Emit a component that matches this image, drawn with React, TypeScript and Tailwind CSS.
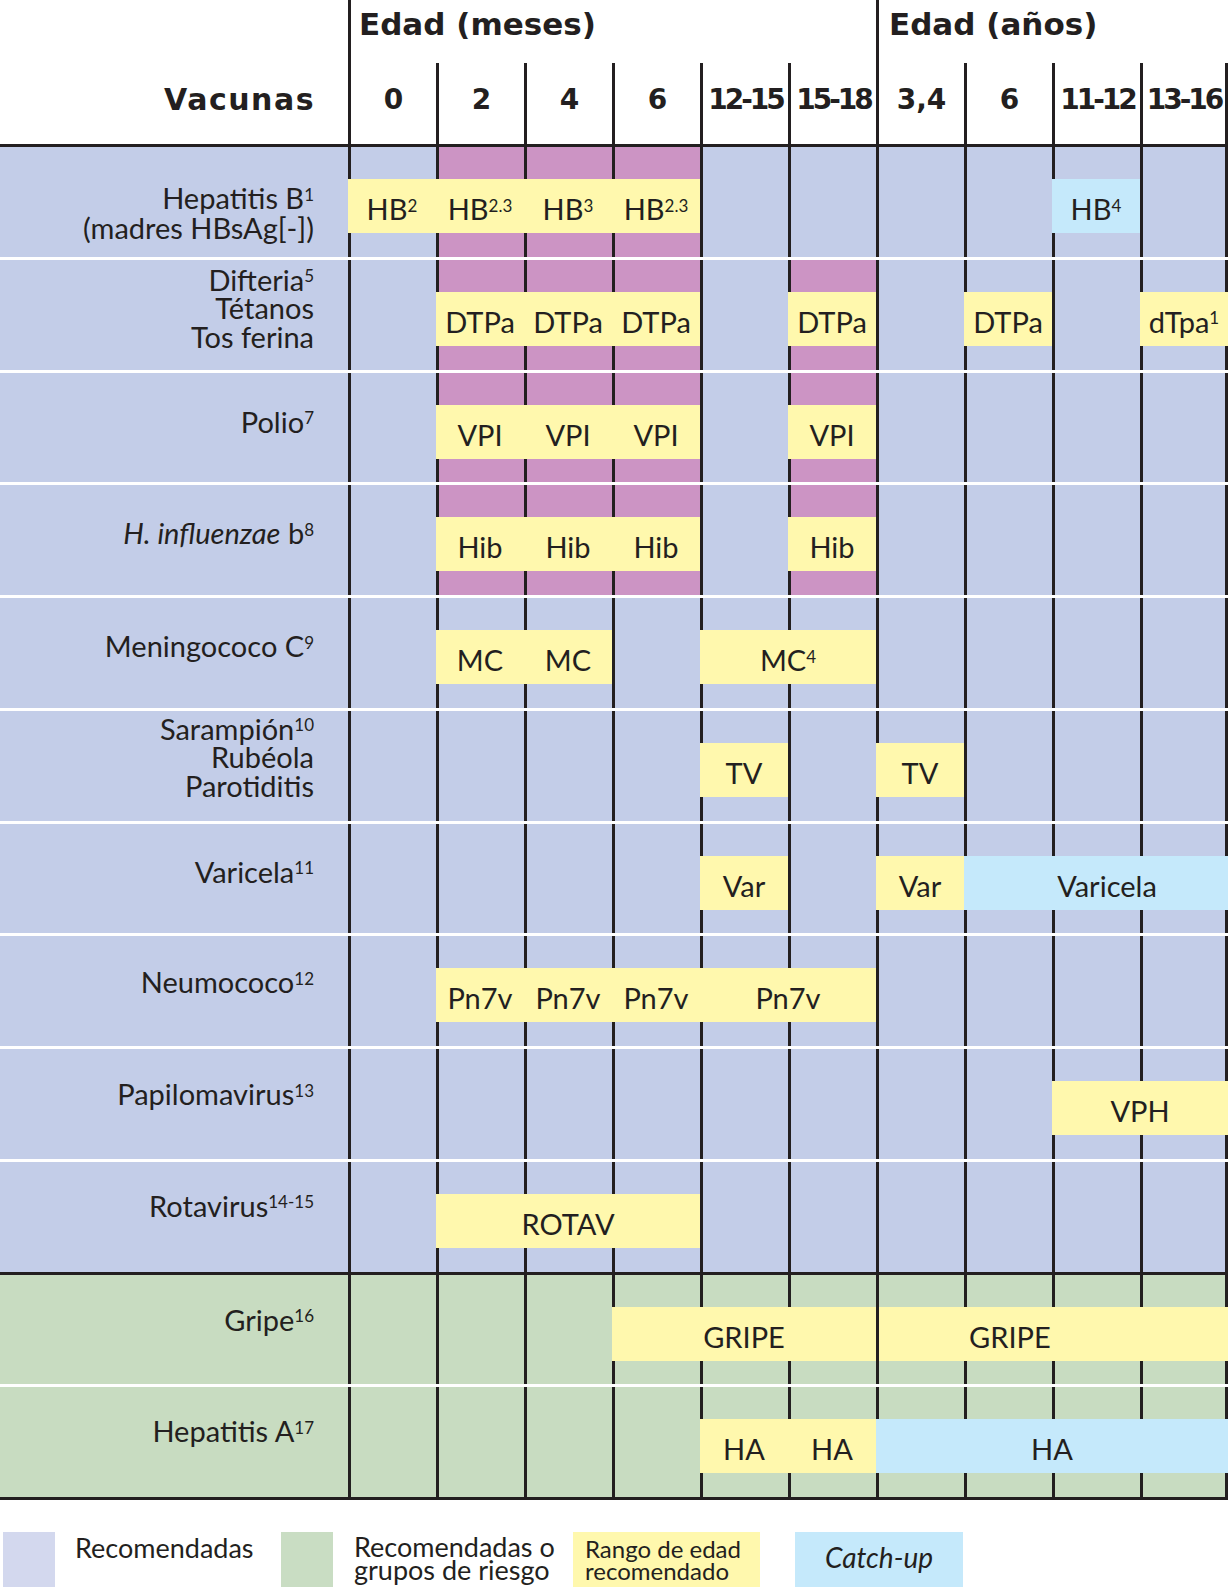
import type { ReactNode } from "react";

const colStart = [
  "col-start-2",
  "col-start-3",
  "col-start-4",
  "col-start-5",
  "col-start-6",
  "col-start-7",
  "col-start-8",
  "col-start-9",
  "col-start-10",
  "col-start-11",
];
const colSpan = [
  "",
  "col-span-1",
  "col-span-2",
  "col-span-3",
  "col-span-4",
  "col-span-5",
];
const innerStart = [
  "col-start-1",
  "col-start-2",
  "col-start-3",
  "col-start-4",
  "col-start-5",
];
const innerCols = [
  "",
  "grid-cols-1",
  "grid-cols-2",
  "grid-cols-3",
  "grid-cols-4",
  "grid-cols-5",
];

const Sup = ({ children }: { children: ReactNode }) => (
  <sup className="text-[17px]">{children}</sup>
);

type Label = { text: ReactNode; at: number; span?: number; cls?: string };
type Bar = {
  start: number;
  span: number;
  tone: "y" | "b";
  labels: Label[];
  inset?: boolean;
};
type Row = {
  label: ReactNode[];
  pt: string;
  lead?: string;
  pink?: number[];
  green?: boolean;
  bars: Bar[];
  dark?: boolean;
};

const each = (t: ReactNode, n: number): Label[] =>
  Array.from({ length: n }).map((_, i) => ({ text: t, at: i }));

const rows: Row[] = [
  {
    label: [
      <>
        Hepatitis B<Sup>1</Sup>
      </>,
      "(madres HBsAg[-])",
    ],
    pt: "pt-[36px]",
    lead: "leading-[29.5px]",
    pink: [1, 2, 3],
    bars: [
      {
        start: 0,
        span: 4,
        tone: "y",
        labels: [
          { text: <>HB<Sup>2</Sup></>, at: 0 },
          { text: <>HB<Sup>2.3</Sup></>, at: 1 },
          { text: <>HB<Sup>3</Sup></>, at: 2 },
          { text: <>HB<Sup>2.3</Sup></>, at: 3 },
        ],
      },
      { start: 8, span: 1, tone: "b", labels: [{ text: <>HB<Sup>4</Sup></>, at: 0 }] },
    ],
  },
  {
    label: [
      <>
        Difteria<Sup>5</Sup>
      </>,
      "Tétanos",
      "Tos ferina",
    ],
    pt: "pt-[6px]",
    pink: [1, 2, 3, 5],
    bars: [
      { start: 1, span: 3, tone: "y", labels: each("DTPa", 3) },
      { start: 5, span: 1, tone: "y", labels: each("DTPa", 1) },
      { start: 7, span: 1, tone: "y", labels: each("DTPa", 1) },
      { start: 9, span: 1, tone: "y", labels: [{ text: <>dTpa<Sup>1</Sup></>, at: 0 }] },
    ],
  },
  {
    label: [
      <>
        Polio<Sup>7</Sup>
      </>,
    ],
    pt: "pt-[35px]",
    pink: [1, 2, 3, 5],
    bars: [
      { start: 1, span: 3, tone: "y", labels: each("VPI", 3) },
      { start: 5, span: 1, tone: "y", labels: each("VPI", 1) },
    ],
  },
  {
    label: [
      <>
        <i>H. influenzae</i> b<Sup>8</Sup>
      </>,
    ],
    pt: "pt-[34px]",
    pink: [1, 2, 3, 5],
    bars: [
      { start: 1, span: 3, tone: "y", labels: each("Hib", 3) },
      { start: 5, span: 1, tone: "y", labels: each("Hib", 1) },
    ],
  },
  {
    label: [
      <>
        Meningococo C<Sup>9</Sup>
      </>,
    ],
    pt: "pt-[34px]",
    bars: [
      { start: 1, span: 2, tone: "y", labels: each("MC", 2) },
      {
        start: 4,
        span: 2,
        tone: "y",
        labels: [{ text: <>MC<Sup>4</Sup></>, at: 0, span: 2 }],
      },
    ],
  },
  {
    label: [
      <>
        Sarampión<Sup>10</Sup>
      </>,
      "Rubéola",
      "Parotiditis",
    ],
    pt: "pt-[4px]",
    bars: [
      { start: 4, span: 1, tone: "y", labels: each("TV", 1) },
      { start: 6, span: 1, tone: "y", labels: each("TV", 1) },
    ],
  },
  {
    label: [
      <>
        Varicela<Sup>11</Sup>
      </>,
    ],
    pt: "pt-[34px]",
    bars: [
      { start: 4, span: 1, tone: "y", labels: each("Var", 1) },
      { start: 6, span: 1, tone: "y", labels: each("Var", 1) },
      {
        start: 7,
        span: 3,
        tone: "b",
        labels: [{ text: "Varicela", at: 0, span: 3, cls: "pl-[22px]" }],
      },
    ],
  },
  {
    label: [
      <>
        Neumococo<Sup>12</Sup>
      </>,
    ],
    pt: "pt-[32px]",
    bars: [
      {
        start: 1,
        span: 5,
        tone: "y",
        labels: [...each("Pn7v", 3), { text: "Pn7v", at: 3, span: 2 }],
      },
    ],
  },
  {
    label: [
      <>
        Papilomavirus<Sup>13</Sup>
      </>,
    ],
    pt: "pt-[31px]",
    bars: [
      { start: 8, span: 2, tone: "y", labels: [{ text: "VPH", at: 0, span: 2 }] },
    ],
  },
  {
    label: [
      <>
        Rotavirus<Sup>14-15</Sup>
      </>,
    ],
    pt: "pt-[30px]",
    dark: true,
    bars: [
      { start: 1, span: 3, tone: "y", labels: [{ text: "ROTAV", at: 0, span: 3 }] },
    ],
  },
  {
    label: [
      <>
        Gripe<Sup>16</Sup>
      </>,
    ],
    pt: "pt-[31px]",
    green: true,
    bars: [
      { start: 3, span: 3, tone: "y", labels: [{ text: "GRIPE", at: 0, span: 3 }] },
      { start: 6, span: 4, tone: "y", inset: true, labels: [{ text: "GRIPE", at: 1 }] },
    ],
  },
  {
    label: [
      <>
        Hepatitis A<Sup>17</Sup>
      </>,
    ],
    pt: "pt-[30px]",
    green: true,
    dark: true,
    bars: [
      { start: 4, span: 2, tone: "y", labels: each("HA", 2) },
      { start: 6, span: 4, tone: "b", labels: [{ text: "HA", at: 0, span: 4 }] },
    ],
  },
];

const ages = ["0", "2", "4", "6", "12-15", "15-18", "3,4", "6", "11-12", "13-16"];

const ScheduleRow = ({ row }: { row: Row }) => {
  const base = row.green ? "bg-[#c8dcc1]" : "bg-[#c3cde8]";
  return (
    <>
      <div className="grid grid-cols-[348px_repeat(10,88px)] grid-rows-[109.75px]">
        <div
          className={`col-start-1 row-start-1 pr-[34px] text-right text-[29px] ${
            row.lead ?? "leading-[28.5px]"
          } ${base} ${row.pt}`}
        >
          {row.label.map((line, i) => (
            <div key={i} className="whitespace-nowrap">
              {line}
            </div>
          ))}
        </div>
        {ages.map((_, i) => (
          <div
            key={i}
            className={`${colStart[i]} row-start-1 border-l-[3px] border-[#231f20] ${
              row.pink?.includes(i) ? "bg-[#cc94c4]" : base
            } ${i === 9 ? "border-r-[3px]" : ""}`}
          />
        ))}
        {row.bars.map((bar, b) => (
          <div
            key={b}
            className={`${colStart[bar.start]} ${colSpan[bar.span]} row-start-1 self-start mt-[32px] h-[54px] grid ${
              innerCols[bar.span]
            } ${bar.tone === "y" ? "bg-[#fff8ad]" : "bg-[#c5e9fb]"} ${bar.inset ? "ml-[3px]" : ""}`}
          >
            {bar.labels.map((l, k) => (
              <div
                key={k}
                className={`${innerStart[l.at]} ${colSpan[l.span ?? 1]} row-start-1 translate-y-[3px] whitespace-nowrap text-center text-[29px] leading-[54px] ${
                  l.cls ?? ""
                }`}
              >
                {l.text}
              </div>
            ))}
          </div>
        ))}
      </div>
      <div className={`h-[3px] w-[1228px] ${row.dark ? "bg-[#231f20]" : "bg-white"}`} />
    </>
  );
};

const App = () => {
  return (
    <div className="w-[1229px] bg-white font-['Lato',sans-serif] text-[#231f20]">
      <div className="grid grid-cols-[348px_repeat(10,88px)] grid-rows-[63px_81px] font-['DejaVu_Sans',sans-serif] font-bold">
        <div className="col-start-1 row-span-2 row-start-1 pr-[33px] pt-[85px] text-right text-[30px] leading-none tracking-[1.5px]">
          Vacunas
        </div>
        <div className="col-span-6 col-start-2 row-start-1 border-l-[3px] border-[#231f20] pl-[8px] pt-[9px] text-[31px] leading-none whitespace-nowrap">
          Edad (meses)
        </div>
        <div className="col-span-4 col-start-8 row-start-1 border-l-[3px] border-[#231f20] pl-[10px] pt-[9px] text-[31px] leading-none whitespace-nowrap">
          Edad (años)
        </div>
        {ages.map((a, i) => (
          <div
            key={i}
            className={`${colStart[i]} row-start-2 border-l-[3px] border-[#231f20] pt-[23px] text-center text-[28px] leading-none whitespace-nowrap ${
              a.length > 3 ? "tracking-[-3px]" : ""
            } ${i === 9 ? "border-r-[3px]" : ""}`}
          >
            {a}
          </div>
        ))}
      </div>
      <div className="h-[3px] w-[1228px] bg-[#231f20]" />

      {rows.map((r, i) => (
        <ScheduleRow key={i} row={r} />
      ))}

      <div className="mt-[32px] flex h-[55px] items-start">
        <div className="ml-[3px] h-[55px] w-[52px] bg-[#d3d8ee]" />
        <div className="ml-[20px] w-[206px] pt-[2px] text-[27px] leading-none">Recomendadas</div>
        <div className="h-[55px] w-[52px] bg-[#c9ddc3]" />
        <div className="ml-[21px] w-[219px] pt-[4px] text-[27px] leading-[22.5px]">
          <div>Recomendadas o</div>
          <div>grupos de riesgo</div>
        </div>
        <div className="h-[55px] w-[187px] bg-[#fff8ad] pl-[12px] pt-[6px] text-[24px] leading-[22px]">
          <div>Rango de edad</div>
          <div>recomendado</div>
        </div>
        <div className="ml-[35px] h-[55px] w-[168px] bg-[#c5e9fb] pt-[11px] text-center text-[28px] italic leading-none">
          Catch-up
        </div>
      </div>
    </div>
  );
};

export default App;
